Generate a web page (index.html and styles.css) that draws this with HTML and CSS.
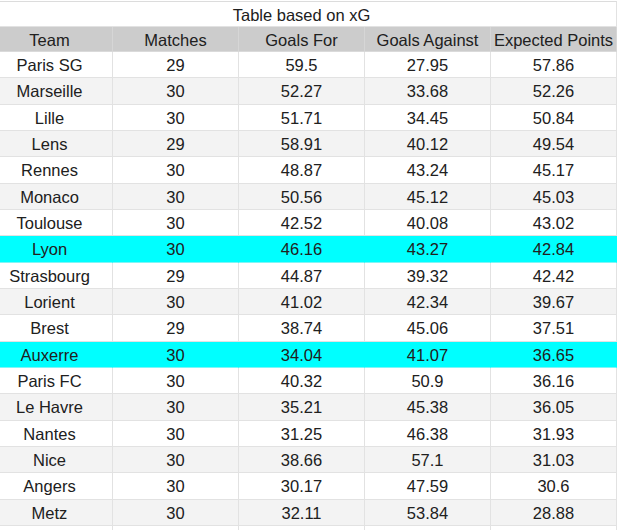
FILE: index.html
```html
<!DOCTYPE html>
<html>
<head>
<meta charset="utf-8">
<link rel="stylesheet" href="styles.css">
</head>
<body>
<table class="xg">
  <thead>
    <tr class="title-row"><th colspan="5" class="title">Table based on xG</th></tr>
    <tr class="head-row"><th>Team</th><th>Matches</th><th>Goals For</th><th>Goals Against</th><th>Expected Points</th></tr>
  </thead>
  <tbody>
    <tr><td>Paris SG</td><td>29</td><td>59.5</td><td>27.95</td><td>57.86</td></tr>
    <tr class="alt"><td>Marseille</td><td>30</td><td>52.27</td><td>33.68</td><td>52.26</td></tr>
    <tr><td>Lille</td><td>30</td><td>51.71</td><td>34.45</td><td>50.84</td></tr>
    <tr class="alt"><td>Lens</td><td>29</td><td>58.91</td><td>40.12</td><td>49.54</td></tr>
    <tr><td>Rennes</td><td>30</td><td>48.87</td><td>43.24</td><td>45.17</td></tr>
    <tr class="alt"><td>Monaco</td><td>30</td><td>50.56</td><td>45.12</td><td>45.03</td></tr>
    <tr><td>Toulouse</td><td>30</td><td>42.52</td><td>40.08</td><td>43.02</td></tr>
    <tr class="hl"><td>Lyon</td><td>30</td><td>46.16</td><td>43.27</td><td>42.84</td></tr>
    <tr><td>Strasbourg</td><td>29</td><td>44.87</td><td>39.32</td><td>42.42</td></tr>
    <tr class="alt"><td>Lorient</td><td>30</td><td>41.02</td><td>42.34</td><td>39.67</td></tr>
    <tr><td>Brest</td><td>29</td><td>38.74</td><td>45.06</td><td>37.51</td></tr>
    <tr class="hl"><td>Auxerre</td><td>30</td><td>34.04</td><td>41.07</td><td>36.65</td></tr>
    <tr><td>Paris FC</td><td>30</td><td>40.32</td><td>50.9</td><td>36.16</td></tr>
    <tr class="alt"><td>Le Havre</td><td>30</td><td>35.21</td><td>45.38</td><td>36.05</td></tr>
    <tr><td>Nantes</td><td>30</td><td>31.25</td><td>46.38</td><td>31.93</td></tr>
    <tr class="alt"><td>Nice</td><td>30</td><td>38.66</td><td>57.1</td><td>31.03</td></tr>
    <tr><td>Angers</td><td>30</td><td>30.17</td><td>47.59</td><td>30.6</td></tr>
    <tr class="alt"><td>Metz</td><td>30</td><td>32.11</td><td>53.84</td><td>28.88</td></tr>
    <tr><td>&nbsp;</td><td>&nbsp;</td><td>&nbsp;</td><td>&nbsp;</td><td>&nbsp;</td></tr>
  </tbody>
</table>
</body>
</html>
```

FILE: styles.css
```css
html, body {
  margin: 0;
  padding: 0;
  background: #ffffff;
  overflow: hidden;
}

body {
  width: 620px;
  height: 530px;
  font-family: "Liberation Sans", Arial, sans-serif;
  font-size: 16.5px;
  color: #202020;
}

.xg {
  border-collapse: separate;
  border-spacing: 0;
  table-layout: fixed;
  width: 630px;
  margin: 1px 0 0 -13px;
}

.xg th,
.xg td {
  padding: 1px 2px 0;
  text-align: center;
  vertical-align: middle;
  font-weight: normal;
  white-space: nowrap;
  border-right: 1px solid #e2e2e2;
  border-bottom: 1px solid #e2e2e2;
  line-height: 18px;
}

.xg .title {
  border-top: 1px solid #dcdcdc;
  background: #ffffff;
}

.title-row {
  height: 26px;
}

.head-row {
  height: 25px;
}

.head-row th {
  background: #cccccc;
  border-right-color: #d6d6d6;
  border-bottom-color: #dadada;
}

.xg tbody tr {
  height: 26.33px;
  background: #ffffff;
}

.xg tbody tr.alt {
  background: #f3f3f3;
}

.xg tbody tr.hl {
  background: #00ffff;
}

.xg tbody tr.hl td {
  border-bottom-color: #7ff6f6;
  border-right-color: #00ffff;
}
```
